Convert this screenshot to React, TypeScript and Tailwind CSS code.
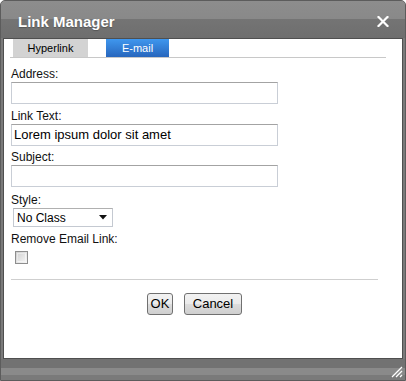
import React from "react";

function Field({ label, value, className = "" }: { label: string; value?: string; className?: string }) {
  return (
    <>
      <div className={`text-[12px] leading-[14px] text-[#111] ${className}`}>{label}</div>
      <div className="mt-[1px] h-[22px] w-[267px] border border-[#c9ced6] border-t-[#a3a3a3] bg-white pl-[2px] text-[13px] leading-[20px] text-black">
        {value}
      </div>
    </>
  );
}

export default function App() {
  return (
    <div className="flex h-[381px] w-[406px] flex-col overflow-hidden rounded-t-[5px] border border-[#5c5c5c] bg-[#7a7a7a] font-['Liberation_Sans',Arial,sans-serif]">
      {/* title bar */}
      <div className="flex h-[37px] shrink-0 items-start justify-between bg-[linear-gradient(to_bottom,#8d8d8d_0%,#898989_48%,#747474_50%,#6e6e6e_100%)] pl-[17px] pr-[16px] pt-[12px]">
        <span className="text-[15px] font-bold leading-[18px] text-white [text-shadow:0_1px_1px_rgba(0,0,0,0.25)]">
          Link Manager
        </span>
        <svg className="mt-[3px]" width="12" height="11" viewBox="0 0 12 11">
          <path d="M1.5 1 L10.5 10 M10.5 1 L1.5 10" stroke="white" strokeWidth="2.2" strokeLinecap="square" />
        </svg>
      </div>

      {/* body */}
      <div className="mx-[2px] h-[321px] shrink-0 border border-[#4f4f4f] bg-white">
        <div className="flex h-[18px] pl-[9px] text-[11px] leading-[18px]">
          <div className="w-[75px] bg-[#d3d3d3] text-center text-black">Hyperlink</div>
          <div className="ml-[18px] w-[63px] bg-[linear-gradient(to_bottom,#3f97ee,#2766bd)] text-center text-white">E-mail</div>
        </div>
        <div className="ml-[6px] h-px w-[376px] bg-[#c8c8c8]" />

        <div className="pl-[7px]">
          <Field label="Address:" className="mt-[9px]" />
          <Field label="Link Text:" value="Lorem ipsum dolor sit amet" className="mt-[5px]" />
          <Field label="Subject:" className="mt-[4px]" />

          <div className="mt-[6px] text-[12px] leading-[14px] text-[#111]">Style:</div>
          <div className="ml-[2px] mt-[1px] flex h-[19px] w-[100px] items-center justify-between border border-[#c4c9d1] border-t-[#b0b0b0] pl-[3px] pr-[5px] text-[12px] text-black">
            <span>No Class</span>
            <svg width="8" height="5" viewBox="0 0 8 5">
              <path d="M0 0 H8 L4 4.5 Z" fill="#111" />
            </svg>
          </div>

          <div className="mt-[5px] text-[12px] leading-[14px] text-[#111]">Remove Email Link:</div>
          <div className="ml-[4px] mt-[5px] h-[13px] w-[13px] border border-[#8e8e8e] bg-[linear-gradient(135deg,#cfcfcf,#f7f7f7)] p-px">
            <div className="h-full w-full border border-[#e9e9e9] border-b-[#f4f4f4] border-r-[#f4f4f4]" />
          </div>

          <div className="mt-[15px] h-px w-[367px] bg-[#cfcfcf]" />

          <div className="mt-[13px] flex w-[367px] justify-center gap-[11px] text-[13px] text-black">
            <button className="h-[22px] w-[26px] rounded-[3px] border border-[#707070] bg-[linear-gradient(to_bottom,#f2f2f2_0%,#ebebeb_50%,#dddddd_50%,#cfcfcf_100%)] leading-[20px]">
              OK
            </button>
            <button className="h-[22px] w-[58px] rounded-[3px] border border-[#707070] bg-[linear-gradient(to_bottom,#f2f2f2_0%,#ebebeb_50%,#dddddd_50%,#cfcfcf_100%)] leading-[20px]">
              Cancel
            </button>
          </div>
        </div>
      </div>

      {/* footer */}
      <div className="relative mx-[-1px] h-[22px] shrink-0 bg-[linear-gradient(to_bottom,#727272_0%,#727272_40%,#8a8a8a_40%,#8a8a8a_75%,#7a7a7a_75%)]">
        <svg className="absolute bottom-[3px] right-[3px]" width="12" height="12" viewBox="0 0 12 12">
          <path d="M11 1 L1 11 M11 5 L5 11 M11 9 L9 11" stroke="white" strokeWidth="1.3" />
        </svg>
      </div>
    </div>
  );
}
